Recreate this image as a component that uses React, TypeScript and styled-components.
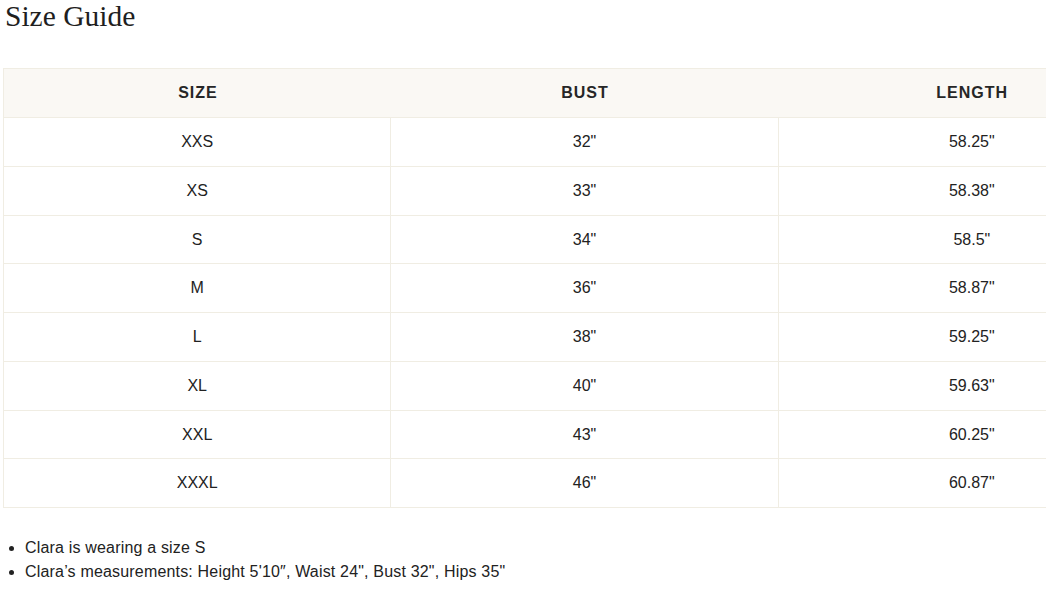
import React from "react";
import styled, { createGlobalStyle } from "styled-components";

const Global = createGlobalStyle`
  html, body {
    margin: 0;
    padding: 0;
    background: #ffffff;
    overflow-x: hidden;
  }
  body {
    font-family: "Liberation Sans", Arial, sans-serif;
    color: #222222;
  }
`;

const Page = styled.div`
  padding: 0 0 0 3px;
  width: 1043px;
  overflow: hidden;
`;

const Title = styled.h1`
  margin: 0 0 36px 2px;
  font-family: "Liberation Serif", "Times New Roman", serif;
  font-weight: 400;
  font-size: 29.5px;
  line-height: 32px;
  color: #1f1f1f;
`;

const Table = styled.table`
  width: 1163px;
  border-collapse: collapse;
  table-layout: fixed;
  border: 1px solid #f0ede3;
`;

const HeadCell = styled.th`
  background: #faf8f4;
  font-weight: 700;
  font-size: 16px;
  letter-spacing: 1px;
  line-height: 24px;
  padding: 12px 0 12px 1px;
  text-align: center;
  color: #262626;
  border-bottom: 1px solid #f0ede3;
`;

const Cell = styled.td`
  font-size: 16px;
  line-height: 23.75px;
  padding: 12px 0;
  text-align: center;
  color: #222222;
  border: 1px solid #f0ede3;
`;

const Notes = styled.ul`
  margin: 28px 0 0 0;
  padding: 0 0 0 22px;
  font-size: 16px;
  line-height: 24px;
  letter-spacing: 0.18px;
  color: #222222;
`;

const Note = styled.li`
  padding-left: 0;
`;

const rows: [string, string, string][] = [
  ["XXS", "32\"", "58.25\""],
  ["XS", "33\"", "58.38\""],
  ["S", "34\"", "58.5\""],
  ["M", "36\"", "58.87\""],
  ["L", "38\"", "59.25\""],
  ["XL", "40\"", "59.63\""],
  ["XXL", "43\"", "60.25\""],
  ["XXXL", "46\"", "60.87\""],
];

export default function App() {
  return (
    <>
      <Global />
      <Page>
        <Title>Size Guide</Title>
        <Table>
          <thead>
            <tr>
              <HeadCell>SIZE</HeadCell>
              <HeadCell>BUST</HeadCell>
              <HeadCell>LENGTH</HeadCell>
            </tr>
          </thead>
          <tbody>
            {rows.map((r) => (
              <tr key={r[0]}>
                <Cell>{r[0]}</Cell>
                <Cell>{r[1]}</Cell>
                <Cell>{r[2]}</Cell>
              </tr>
            ))}
          </tbody>
        </Table>
        <Notes>
          <Note>Clara is wearing a size S</Note>
          <Note>Clara’s measurements: Height 5'10″, Waist 24", Bust 32", Hips 35"</Note>
        </Notes>
      </Page>
    </>
  );
}
